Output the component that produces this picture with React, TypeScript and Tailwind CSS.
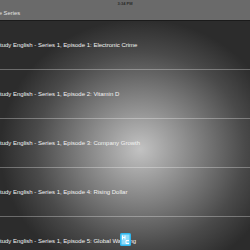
import React from 'react';

const episodes = [
  'Study English - Series 1, Episode 1: Electronic Crime',
  'Study English - Series 1, Episode 2: Vitamin D',
  'Study English - Series 1, Episode 3: Company Growth',
  'Study English - Series 1, Episode 4: Rising Dollar',
  'Study English - Series 1, Episode 5: Global Warming',
];

const Badge: React.FC = () => (
  <svg className="absolute left-[120px] top-[233px]" width="11" height="13" viewBox="0 0 11 13">
    <rect x="0" y="0" width="11" height="13" rx="1.5" fill="#2fb8ef" />
    <rect x="1.5" y="1.5" width="8" height="10" fill="#8fdcfa" />
    <path d="M2.5 2.5v4M5 2.5v4M2.5 4.5h2.5" stroke="#fff" strokeWidth="1" fill="none" />
    <path d="M6 7.5h3M6 7.5v3h3" stroke="#fff" strokeWidth="1" fill="none" />
  </svg>
);

const App: React.FC = () => (
  <div className="w-[250px] h-[250px] overflow-hidden relative bg-[#2a2a2a]" style={{ fontFamily: '"Liberation Sans", Arial, sans-serif' }}>
    <div className="h-[20px] bg-[#6a6a6a] relative">
      <div className="absolute left-0 right-0 top-[1px] text-center text-[4px] font-bold leading-[5px] text-[#2b2b2b]">3:34 PM</div>
      <div className="absolute left-[-2.5px] top-[10px] text-[5.8px] leading-[7px] text-[#e4e4e4]">le Series</div>
    </div>
    <div className="h-[1px] bg-[#1b1b1b]" />
    <div className="h-[229px] bg-[radial-gradient(ellipse_140px_130px_at_56%_56%,#c2c2c2_0%,#8a8a8a_35%,#4a4a4a_75%,#2c2c2c_100%)]">
      {episodes.map((t, i) => (
        <div key={i} className="h-[49px] flex items-center border-b border-white/30 ml-[-4px]">
          <span className="text-[6px] leading-[8px] text-[#f2f2f2] whitespace-nowrap">{t}</span>
        </div>
      ))}
    </div>
    <Badge />
  </div>
);

export default App;
